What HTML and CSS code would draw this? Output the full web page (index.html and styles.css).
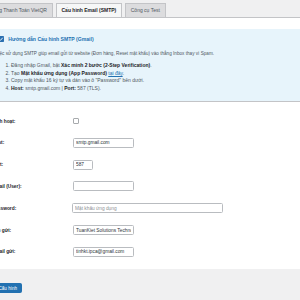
FILE: index.html
```html
<!DOCTYPE html>
<html lang="vi">
<head>
	<meta charset="UTF-8">
	<meta name="viewport" content="width=device-width, initial-scale=1.0">
	<title>Cấu hình Email (SMTP)</title>
	<link rel="stylesheet" href="styles.css">
</head>
<body>
    <div class="wrap">
        <nav class="tabs">
            <a href="#" class="tab">Cổng Thanh Toán VietQR</a>
            <a href="#" class="tab active">Cấu hình Email (SMTP)</a>
            <a href="#" class="tab">Công cụ Test</a>
        </nav>

        <div class="panel">
            <div class="guide">
                <h3 class="guide-title">
                    <svg class="guide-icon" viewBox="0 0 10 10" width="6" height="6">
                        <rect x="0" y="0" width="10" height="10" rx="1.2" fill="#2a6fb0"/>
                        <path d="M2.2 5.2 L4.2 7.1 L7.9 2.9" fill="none" stroke="#fff" stroke-width="1.5"/>
                    </svg>
                    Hướng dẫn Cấu hình SMTP (Gmail)
                </h3>
                <p class="guide-text">Việc sử dụng SMTP giúp email gửi từ website (Đơn hàng, Reset mật khẩu) vào thẳng Inbox thay vì Spam.</p>
                <ol class="guide-steps">
                    <li>Đăng nhập Gmail, bật <b>Xác minh 2 bước (2-Step Verification)</b>.</li>
                    <li>Tạo <b>Mật khẩu ứng dụng (App Password)</b> <a href="#">tại đây</a>.</li>
                    <li>Copy mật khẩu 16 ký tự và dán vào ô "Password" bên dưới.</li>
                    <li><b>Host:</b> smtp.gmail.com | <b>Port:</b> 587 (TLS).</li>
                </ol>
            </div>

            <div class="form">
                <label class="form-label">Kích hoạt:</label>
                <div class="form-field"><input type="checkbox" class="check"></div>

                <label class="form-label">Host:</label>
                <div class="form-field"><input type="text" class="field" value="smtp.gmail.com"></div>

                <label class="form-label">Port:</label>
                <div class="form-field"><input type="text" class="field field-small" value="587"></div>

                <label class="form-label">Email (User):</label>
                <div class="form-field"><input type="text" class="field" value=""></div>

                <label class="form-label">Password:</label>
                <div class="form-field"><input type="password" class="field field-wide" placeholder="Mật khẩu ứng dụng"></div>

                <label class="form-label">Tên gửi:</label>
                <div class="form-field"><input type="text" class="field" value="TuanKiet Solutions Technology"></div>

                <label class="form-label">Email gửi:</label>
                <div class="form-field"><input type="text" class="field" value="tinhkt.ipca@gmail.com"></div>
            </div>
        </div>

        <div class="actions">
            <button class="button">Lưu Cấu hình</button>
        </div>
    </div>
</body>
</html>
```

FILE: styles.css
```css
*{
	padding: 0;
	margin: 0;
	box-sizing: border-box;
}
html, body {
	height: 100%;
	overflow: hidden;
}
body {
	background: #f0f0f1;
	font-family: "Liberation Sans", Arial, sans-serif;
	font-size: 5px;
	color: #3c434a;
}
a {
	color: #2271b1;
}

.wrap {
	margin-left: -8px;
	min-height: 100%;
	display: flex;
	flex-direction: column;
}

/* tabs */
.tabs {
	display: flex;
	gap: 2.5px;
	padding-top: 3px;
	margin-left: -8px;
	border-bottom: 1px solid #c3c4c7;
}
.tab {
	display: block;
	height: 14px;
	line-height: 13px;
	padding: 0 5px;
	border: 1px solid #c3c4c7;
	border-bottom: none;
	background: #dcdcde;
	color: #50575e;
	font-size: 5px;
	text-decoration: none;
}
.tab.active {
	background: #f6f7f7;
	color: #1d2327;
	font-weight: bold;
}

/* white panel */
.panel {
	background: #fff;
	padding: 11px 0 6.6px;
}

.guide {
	background: #e7f4fb;
	border-bottom: 1px solid #c3c4c7;
	margin-left: -4px;
	padding: 6px 0 8px 7.5px;
}
.guide-title {
	display: flex;
	align-items: center;
	gap: 4.5px;
	margin-left: 2.3px;
	height: 7px;
	font-size: 5.1px;
	color: #2271b1;
}
.guide-icon {
	flex: none;
}
.guide-text {
	margin-top: 7.5px;
	line-height: 7px;
	font-size: 4.65px;
	color: #50575e;
}
.guide-steps {
	margin-top: 5.3px;
	padding-left: 15.5px;
	line-height: 7.8px;
	color: #50575e;
}
.guide-steps b {
	color: #1d2327;
}

/* form rows */
.form {
	display: grid;
	grid-template-columns: 81px 1fr;
	grid-auto-rows: 21.8px;
	align-items: center;
	margin-top: 8.2px;
}
.form-label {
	font-weight: bold;
	font-size: 4.8px;
	color: #1d2327;
}
.form-field {
	display: flex;
	align-items: center;
}
.check {
	appearance: none;
	width: 6px;
	height: 6px;
	border: 1px solid #a7aaad;
	border-radius: 1px;
	background: #fff;
}
.field {
	width: 61px;
	height: 10px;
	padding: 0 2px;
	border: 1px solid #b9bcc0;
	border-radius: 1.5px;
	font-family: inherit;
	font-size: 4.8px;
	color: #2c3338;
	background: #fff;
}
.field::placeholder {
	color: #8c8f94;
}
.field-small {
	width: 20px;
}
.field-wide {
	width: 151px;
	margin-left: -1px;
}

/* footer */
.actions {
	flex: 1;
	padding-top: 13.5px;
}
.button {
	margin-left: -8px;
	height: 10.5px;
	padding: 0 4px;
	background: #2271b1;
	border: 1px solid #2271b1;
	border-radius: 1.5px;
	color: #fff;
	font-family: inherit;
	font-size: 4.6px;
}
```
